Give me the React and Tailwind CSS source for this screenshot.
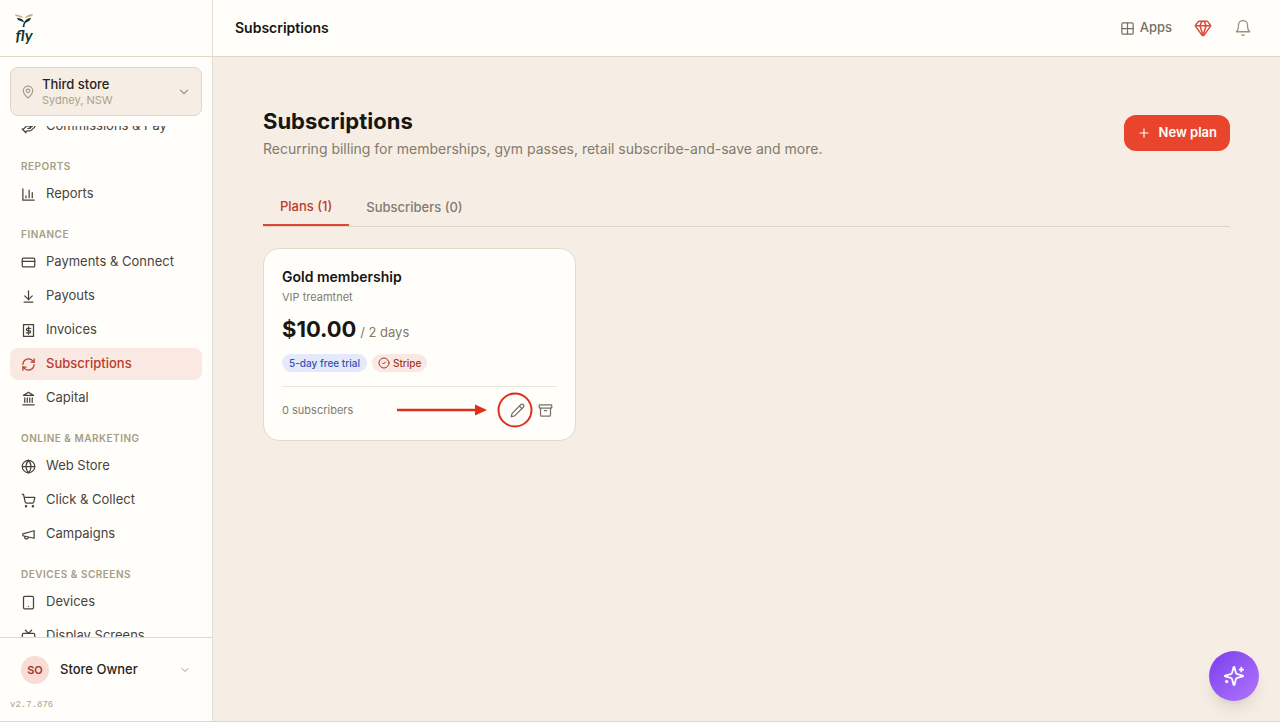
import React, { useState } from 'react';
import {
  Archive,
  ArrowDownToLine,
  ChevronDown,
  CircleCheck,
  CreditCard,
  Gem,
  Globe,
  Grid2x2,
  HandCoins,
  MapPin,
  Pencil,
  Plus,
  RefreshCw,
  ShoppingCart,
  Tv,
} from 'lucide-react';

const Icon = ({ children, ...props }) => (
  <svg
    viewBox="0 0 24 24"
    fill="none"
    stroke="currentColor"
    strokeWidth="2"
    strokeLinecap="round"
    strokeLinejoin="round"
    {...props}
  >
    {children}
  </svg>
);

const ChartIcon = (props) => (
  <Icon {...props}>
    <path d="M3 3v18h18M18 17V9M13 17V5M8 17v-3" />
  </Icon>
);

const InvoiceIcon = (props) => (
  <Icon {...props}>
    <path d="M4 2.500h16v19H4z" />
    <path d="M15.500 8.500h-5a1.800 1.800 0 0 0 0 3.600h3a1.800 1.800 0 0 1 0 3.600h-5M12 6v12" />
  </Icon>
);

const BankIcon = (props) => (
  <Icon {...props}>
    <path d="M3 22h18M6 18v-7M10 18v-7M14 18v-7M18 18v-7M12 2l8 5H4z" />
  </Icon>
);

const MegaphoneIcon = (props) => (
  <Icon {...props}>
    <path d="m3 11 18-5v12L3 14v-3zM11.600 16.800a3 3 0 1 1-5.800-1.600" />
  </Icon>
);

const DeviceIcon = (props) => (
  <Icon {...props}>
    <rect width="16" height="20" x="4" y="2" rx="2" />
    <path d="M12 18h.01" />
  </Icon>
);

const BellIcon = (props) => (
  <Icon {...props}>
    <path d="M6 8a6 6 0 0 1 12 0c0 7 3 9 3 9H3s3-2 3-9M10.300 21a1.940 1.940 0 0 0 3.400 0" />
  </Icon>
);

const SparklesIcon = (props) => (
  <Icon {...props}>
    <path d="M9.937 15.500A2 2 0 0 0 8.500 14.063l-6.135-1.582a.5.5 0 0 1 0-.962L8.500 9.936A2 2 0 0 0 9.937 8.500l1.582-6.135a.5.5 0 0 1 .963 0L14.063 8.500A2 2 0 0 0 15.500 9.937l6.135 1.581a.5.5 0 0 1 0 .964L15.500 14.063a2 2 0 0 0-1.437 1.437l-1.582 6.135a.5.5 0 0 1-.963 0z" />
    <path d="M20 3v4M22 5h-4M4 17v2M5 18H3" />
  </Icon>
);

const sections = [
  { title: '', items: [{ label: 'Commissions & Pay', icon: HandCoins }] },
  { title: 'Reports', items: [{ label: 'Reports', icon: ChartIcon }] },
  {
    title: 'Finance',
    items: [
      { label: 'Payments & Connect', icon: CreditCard },
      { label: 'Payouts', icon: ArrowDownToLine },
      { label: 'Invoices', icon: InvoiceIcon },
      { label: 'Subscriptions', icon: RefreshCw },
      { label: 'Capital', icon: BankIcon },
    ],
  },
  {
    title: 'Online & Marketing',
    items: [
      { label: 'Web Store', icon: Globe },
      { label: 'Click & Collect', icon: ShoppingCart },
      { label: 'Campaigns', icon: MegaphoneIcon },
    ],
  },
  {
    title: 'Devices & Screens',
    items: [
      { label: 'Devices', icon: DeviceIcon },
      { label: 'Display Screens', icon: Tv },
    ],
  },
];

const Logo = () => (
  <a href="#" aria-label="fly" className="flex w-5 flex-col items-center text-[#12372f]">
    <svg viewBox="0 0 36 26" className="h-[13px] w-[18px]" fill="none">
      <path d="M0 1c8 0 14 2 17 8-4-3-9-3-13-4C2 4 0 3 0 1z" fill="#d9a688" />
      <path d="M36 0c-8 0-14 3-17 9 4-3 9-3 13-4 2-1 4-3 4-5z" fill="#d9a688" />
      <path d="M4 8c6 0 13 2 14 9-5-4-12-2-14-9z" fill="#12372f" />
      <path d="M32 8c-8 0-14 5-17 18h4c0-7 2-9 7-11 3-1 5-4 6-7z" fill="#12372f" />
    </svg>
    <span className="font-[Lato,sans-serif] text-base leading-4 font-bold italic">fly</span>
  </a>
);

const Sidebar = () => (
  <aside className="flex w-[213px] shrink-0 flex-col border-r border-[#e2ddd0] bg-[#fffefb]">
    <div className="flex h-[57px] shrink-0 items-center border-b border-[#ddd8c8] px-3.5">
      <Logo />
    </div>

    <div className="p-2.5">
      <button className="flex h-[49px] w-full items-center gap-[7px] rounded-lg border border-[#ddd6c8] bg-[#f6eee4] px-2.5 text-left">
        <MapPin className="size-3.5 text-[#a39a88]" strokeWidth={2} />
        <span className="flex-1">
          <span className="block text-[13px] leading-4 font-medium text-[#262420]">Third store</span>
          <span className="block text-[11px] leading-4 text-[#aaa18e]">Sydney, NSW</span>
        </span>
        <ChevronDown className="size-3.5 text-[#a39a88]" strokeWidth={2} />
      </button>
    </div>

    <nav className="min-h-0 flex-1 overflow-hidden px-2.5">
      <div className="-mt-4">
        {sections.map((section) => (
          <div key={section.title} className="mb-4">
            {section.title && (
              <h2 className="mb-1 px-[11px] text-[10px] leading-4 font-semibold tracking-wider text-[#a59d85] uppercase">
                {section.title}
              </h2>
            )}
            <div className="flex flex-col gap-0.5">
              {section.items.map(({ label, icon: ItemIcon }) => (
                <a
                  key={label}
                  href="#"
                  className={`flex h-8 items-center gap-2.5 rounded-lg px-[11px] text-[13px] ${
                    label === 'Subscriptions' ? 'bg-[#fae8e3] font-medium text-[#b83c2b]' : 'text-[#48443d]'
                  }`}
                >
                  <ItemIcon className="size-[15px] shrink-0" strokeWidth={2} />
                  {label}
                </a>
              ))}
            </div>
          </div>
        ))}
      </div>
    </nav>

    <div className="shrink-0 border-t border-[#ddd8c8] px-2.5 pt-[18px] pb-2">
      <button className="flex w-full items-center gap-[11px] px-[11px] text-left">
        <span className="flex size-7 items-center justify-center rounded-full bg-[#f9dcd6] text-[11px] font-semibold text-[#a63526]">
          SO
        </span>
        <span className="flex-1 text-[13px] font-medium text-[#262420]">Store Owner</span>
        <ChevronDown className="size-3 text-[#a39a88]" strokeWidth={2} />
      </button>
      <p className="mt-[13px] font-['Liberation_Mono',monospace] text-[9px] leading-4 text-[#aaa18e]">v2.7.876</p>
    </div>
  </aside>
);

const TopBar = () => (
  <header className="flex h-[57px] shrink-0 items-center justify-between border-b border-[#ddd8c8] bg-[#fffefb] pr-7 pl-[22px]">
    <p className="text-sm font-semibold text-[#171613]">Subscriptions</p>
    <div className="flex items-center gap-[22px]">
      <button className="flex items-center gap-[5px] text-[13px] font-medium text-[#777064]">
        <Grid2x2 className="size-[15px]" strokeWidth={2} />
        Apps
      </button>
      <button aria-label="Upgrade" className="text-[#dd4935]">
        <Gem className="size-[18px]" strokeWidth={2} />
      </button>
      <button aria-label="Notifications" className="text-[#9c957e]">
        <BellIcon className="size-[18px]" strokeWidth={1.75} />
      </button>
    </div>
  </header>
);

const PlanCard = () => (
  <article className="relative rounded-2xl border border-[#e0dccb] bg-[#fffefb] px-[18px] pt-[18px] pb-4">
    <h3 className="text-sm leading-5 font-semibold text-[#171613]">Gold membership</h3>
    <p className="mt-0.5 text-[11px] leading-4 text-[#827b6d]">VIP treamtnet</p>
    <p className="mt-2 leading-8 text-[#827b6d]">
      <span className="text-[22px] font-bold text-[#171613]">$10.00</span>
      <span className="text-[13px]"> / 2 days</span>
    </p>
    <div className="mt-1.5 flex gap-[5px] text-[10px] leading-[18px] font-medium">
      <span className="rounded-full bg-[#e4eafc] px-[7px] text-[#3653b5]">5-day free trial</span>
      <span className="flex items-center gap-[3px] rounded-full bg-[#fae8e3] px-1.5 text-[#a63526]">
        <CircleCheck className="size-3" strokeWidth={2} />
        Stripe
      </span>
    </div>
    <div className="mt-3.5 flex items-center border-t border-[#ebe7dc] pt-[9px]">
      <span className="flex-1 text-[11px] text-[#827b6d]">0 subscribers</span>
      <div className="-mr-0.5 flex text-[#777064]">
        <button aria-label="Edit plan" className="flex size-7 items-center justify-center">
          <Pencil className="size-[15px]" strokeWidth={2} />
        </button>
        <button aria-label="Archive plan" className="flex size-7 items-center justify-center">
          <Archive className="size-[15px]" strokeWidth={2} />
        </button>
      </div>
    </div>
    <svg
      className="pointer-events-none absolute right-10 bottom-3 h-9 w-[140px]"
      viewBox="0 0 140 36"
      fill="none"
      stroke="#dc301b"
    >
      <path d="M2 18h82" strokeWidth="2.5" />
      <path d="M80 12.500 92 18 80 23.500z" fill="#dc301b" stroke="none" />
      <circle cx="120" cy="18" r="16.500" strokeWidth="2" />
    </svg>
  </article>
);

const App = () => {
  const [tab, setTab] = useState('plans');

  const tabs = [
    { id: 'plans', label: 'Plans (1)' },
    { id: 'subscribers', label: 'Subscribers (0)' },
  ];

  return (
    <div className="flex h-screen border-b border-[#ddd8c8] bg-[#f6eee4] font-[Inter,sans-serif]">
      <Sidebar />
      <div className="flex min-w-0 flex-1 flex-col">
        <TopBar />
        <main className="flex-1 px-[50px] pt-12">
          <div className="flex items-center justify-between">
            <div>
              <h1 className="text-[22px] leading-8 font-bold text-[#171613]">Subscriptions</h1>
              <p className="text-sm leading-6 text-[#827b6d]">
                Recurring billing for memberships, gym passes, retail subscribe-and-save and more.
              </p>
            </div>
            <button className="flex h-9 items-center gap-2 rounded-xl bg-[#e8452c] px-[13px] text-[13px] font-semibold text-white">
              <Plus className="size-3.5" strokeWidth={2} />
              New plan
            </button>
          </div>

          <div role="tablist" className="mt-[25px] flex border-b border-[#ddd6c8]">
            {tabs.map((t) => (
              <button
                key={t.id}
                role="tab"
                aria-selected={tab === t.id}
                onClick={() => setTab(t.id)}
                className={`h-10 px-[17px] pt-1 text-[13px] font-medium ${
                  tab === t.id ? 'border-b-2 border-[#dd4935] text-[#b83c2b]' : 'text-[#827b6d]'
                }`}
              >
                {t.label}
              </button>
            ))}
          </div>

          <div className="mt-[21px] grid grid-cols-3 gap-3.5">
            {tab === 'plans' && <PlanCard />}
          </div>
        </main>
      </div>

      <button
        aria-label="Assistant"
        className="fixed right-[21px] bottom-[21px] flex size-[50px] items-center justify-center rounded-full bg-linear-to-br from-[#7c3aed] to-[#b275fb] text-white shadow-lg"
      >
        <SparklesIcon className="size-[22px]" strokeWidth={2} />
      </button>
    </div>
  );
};

export default App;
